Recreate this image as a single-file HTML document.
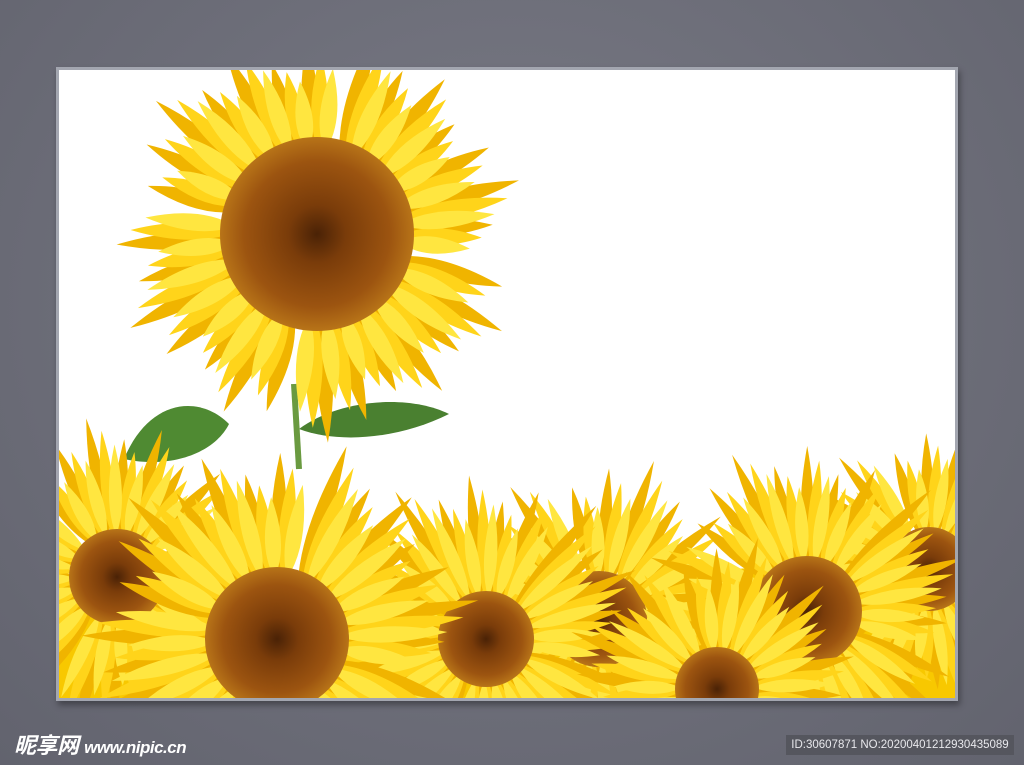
<!DOCTYPE html>
<html><head><meta charset="utf-8"><style>
html,body{margin:0;padding:0;overflow:hidden}
body{width:1024px;height:765px;background:radial-gradient(ellipse at 50% 40%,#7a7b86,#62636e);font-family:"Liberation Sans","Noto Sans CJK SC",sans-serif;position:relative}
#frame{position:absolute;left:56px;top:67px;width:896px;height:628px;border:3px solid #a3a6b0;background:#fff;box-shadow:2px 4px 6px rgba(0,0,0,.35);overflow:hidden}
#wm{position:absolute;left:14px;top:734px;height:24px;line-height:24px;color:#fff;font-size:22px;font-weight:bold;font-style:italic;letter-spacing:-0.5px;white-space:nowrap}
#wm span{font-size:17px}
#id{position:absolute;left:786px;top:735px;width:228px;height:20px;background:#55565e;color:#e8e8ec;font-size:11.5px;line-height:20px;text-align:center}
</style></head><body>
<div id="frame"><svg id="s" width="896" height="628" viewBox="60 71 896 628" xmlns="http://www.w3.org/2000/svg" style="display:block">
<defs>
<radialGradient id="disc"><stop offset="0" stop-color="#4a2206"/><stop offset=".3" stop-color="#7a3c0a"/><stop offset=".75" stop-color="#9c5410"/><stop offset="1" stop-color="#b87418"/></radialGradient>
</defs>
<path d="M230 425 C200 395 150 400 125 460 C170 470 215 455 230 425Z" fill="#4f8a32"/>
<path d="M300 430 C340 400 410 395 450 415 C400 440 340 445 300 430Z" fill="#4a8030"/>
<path d="M295 385 L300 470" stroke="#6a9a40" stroke-width="6"/>
<path d="M60 600 Q300 560 500 610 Q700 560 956 560 L956 699 L60 699Z" fill="#f8c800"/>
<g id="fl"></g>
</svg></div>
<div id="wm">昵享网 <span>www.nipic.cn</span></div>
<div id="id">ID:30607871 NO:20200401212930435089</div>
<script>
var g=document.getElementById('fl'),ns='http://www.w3.org/2000/svg';
function fl(cx,cy,r,L,n,w,rot){
 var cols=['#f0b400','#ffd41a','#ffe640'];
 for(var layer=0;layer<3;layer++){
 for(var i=0;i<n;i++){var a=rot+(i+layer*0.33)*360/n+((i*13)%7-3);
  var len=L*(1-layer*0.12)*(0.85+0.3*((i*7)%5)/4);
  var s=r*0.85;
  var p=document.createElementNS(ns,'path');
  p.setAttribute('d','M'+s+' 0 Q'+(s+len*0.4)+' '+(-w)+' '+(s+len)+' 0 Q'+(s+len*0.4)+' '+w+' '+s+' 0Z');
  p.setAttribute('fill',cols[layer]);
  p.setAttribute('transform','translate('+cx+' '+cy+') rotate('+a+')');g.appendChild(p);}}
 var c=document.createElementNS(ns,'circle');c.setAttribute('cx',cx);c.setAttribute('cy',cy);c.setAttribute('r',r);c.setAttribute('fill','url(#disc)');g.appendChild(c);
}
fl(318,235,97,110,28,17,0);
fl(930,570,42,100,22,12,5);
fl(600,620,48,110,22,13,10);
fl(118,578,48,105,24,13,3);
fl(808,612,55,110,26,13,8);
fl(487,640,48,115,26,13,2);
fl(718,690,42,105,22,13,6);
fl(278,640,72,125,28,16,4);
</script>
</body></html>
